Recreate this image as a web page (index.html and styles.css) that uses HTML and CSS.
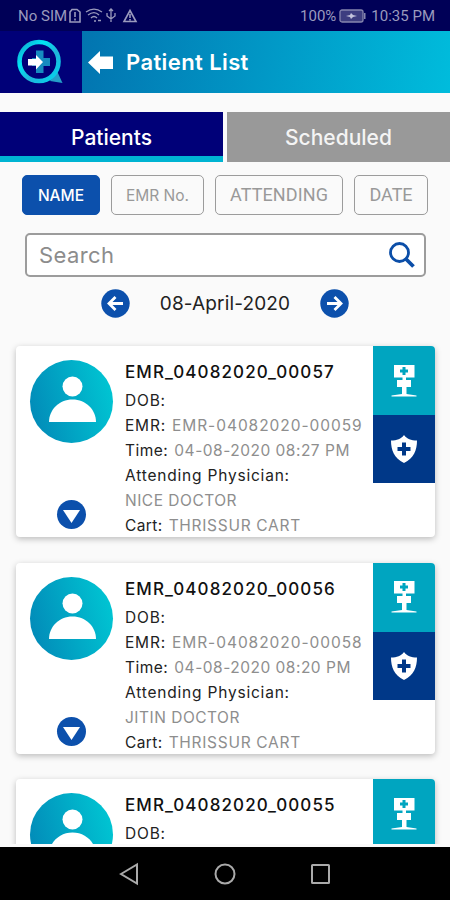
FILE: index.html
```html
<!DOCTYPE html>
<html lang="en">
<head>
    <meta charset="UTF-8">
    <title>Patient List</title>
    <link rel="stylesheet" href="styles.css">
</head>
<body>
<svg class="sprite" width="0" height="0">
    <symbol id="person" viewBox="0 0 48 48">
        <circle cx="24.5" cy="11.5" r="10"/>
        <path d="M1 47C1 35 11 24.500 24.500 24.500S48 35 48 47Z"/>
    </symbol>
    <symbol id="cart" viewBox="0 0 26 34">
        <path fill-rule="evenodd" d="M3 1H23.500V13.500H15V16H20V23H15.500V30L25.500 31.500V32.500H.5V31.500L11 30V23H6V16H11.500V13.500H3ZM11.500 3V5.500H9V8.500H11.500V11H14.500V8.500H17V5.500H14.500V3Z"/>
    </symbol>
    <symbol id="shield" viewBox="0 0 26 28">
        <path fill-rule="evenodd" d="M13 0C16 4 20 5.500 26 5.500C26 15 23 23 13 28C3 23 0 15 0 5.500C6 5.500 10 4 13 0ZM11 7.500V12H6.500V16H11V20.500H15V16H19.500V12H15V7.500Z"/>
    </symbol>
</svg>
<div class="phone">
    <div class="status">
        <span class="sim">No SIM</span>
        <svg class="status-icons" width="72" height="16" viewBox="0 0 72 16" fill="none" stroke="currentColor" stroke-width="1.3">
            <path d="M4 1.500H9L12 4V14H2V4ZM7 4V9M7 10.500V12.500" stroke-width="1.600"/>
            <path d="M18 4C23 .5 29 .5 34 4M20 7C24 4 28 4 31 7M23 10C25 8 27 8 29 10M26 13H28M30 12.500H33"/>
            <path d="M43 1V14M41 3L43 1L45 3M39 5V8L43 11L47 8V5"/>
            <path d="M62 2.500L68 13.500H56ZM62 6V10M62 11V12.500" stroke-width="1.600"/>
        </svg>
        <span class="battery">100%</span>
        <svg class="battery-icon" width="27" height="14" viewBox="0 0 27 14">
            <rect x="1" y="1" width="23" height="12" rx="2" fill="#3d3d80" stroke="#8585ae" stroke-width="1.300"/>
            <path d="M25 4H26.500V10H25Z" fill="#8585ae"/>
            <path d="M7 7L11 6L12 4L14 6L18 7L14 8L12 10L11 8Z" fill="#c4c4dc"/>
        </svg>
        <span class="clock">10:35 PM</span>
    </div>
    <div class="header">
        <div class="logo">
            <svg width="46" height="46" viewBox="0 0 46 46">
                <defs>
                    <linearGradient id="ring" x1="0" y1="0" x2="1" y2="1">
                        <stop offset="0" stop-color="#159fcb"/>
                        <stop offset=".3" stop-color="#00e4f4"/>
                        <stop offset=".6" stop-color="#20b5da"/>
                        <stop offset="1" stop-color="#00d5ef"/>
                    </linearGradient>
                </defs>
                <path d="M40 32L45.500 44L33 42Z" fill="#249fc9"/>
                <circle cx="22" cy="22.500" r="19.500" fill="none" stroke="url(#ring)" stroke-width="4.600"/>
                <path d="M19 11.500H26.500V19H33V27H26.500V34H19V27H15V19H19Z" fill="#168bc0"/>
                <path d="M11 20H19V16L26 23L19 30.500V26.500H11Z" fill="#fff"/>
            </svg>
        </div>
        <div class="bar">
            <svg width="25" height="23" viewBox="0 0 25 23" fill="#fff">
                <path d="M0 11.500L12 0V5.500H25V18H12V23Z"/>
            </svg>
            <h1>Patient List</h1>
        </div>
    </div>
    <div class="tabs">
        <div class="tab active">Patients</div>
        <div class="tab scheduled">Scheduled</div>
    </div>
    <div class="filters">
        <div class="filter selected">NAME</div>
        <div class="filter emr">EMR No.</div>
        <div class="filter attending">ATTENDING</div>
        <div class="filter date">DATE</div>
    </div>
    <div class="search">
        <span>Search</span>
        <svg width="26" height="26" viewBox="0 0 26 26" fill="none" stroke="#0b4ea8">
            <circle cx="10.500" cy="10.500" r="9" stroke-width="2.800"/>
            <path d="M17 17L24.500 24.500" stroke-width="3.800"/>
        </svg>
    </div>
    <div class="day">
        <svg width="29" height="29" viewBox="0 0 29 29">
            <circle cx="14.500" cy="14.500" r="14.200" fill="#0c50ac"/>
            <path d="M22 14.500H8M14.500 8L8 14.500L14.500 21" fill="none" stroke="#fff" stroke-width="2.800"/>
        </svg>
        <span>08-April-2020</span>
        <svg width="29" height="29" viewBox="0 0 29 29">
            <circle cx="14.500" cy="14.500" r="14.200" fill="#0c50ac"/>
            <path d="M7 14.500H21M14.500 8L21 14.500L14.500 21" fill="none" stroke="#fff" stroke-width="2.800"/>
        </svg>
    </div>
    <div class="list">
        <div class="card">
            <div class="side">
                <div class="avatar"><svg width="48" height="48"><use href="#person"/></svg></div>
                <div class="expand"><svg width="17" height="13" viewBox="0 0 17 13"><path d="M0 0H17L8.500 13Z"/></svg></div>
            </div>
            <div class="info">
                <h2>EMR_04082020_00057</h2>
                <p><b class="dob">DOB:</b></p>
                <p><b class="emr-key">EMR:</b><span class="emr-no">EMR-04082020-00059</span></p>
                <p><b class="time-key">Time:</b><span class="time">04-08-2020 08:27 PM</span></p>
                <p><b class="physician">Attending Physician:</b></p>
                <p><span class="doctor">NICE DOCTOR</span></p>
                <p><b class="cart-key">Cart:</b><span class="cart-name">THRISSUR CART</span></p>
            </div>
            <div class="actions">
                <div class="action"><svg width="26" height="34"><use href="#cart"/></svg></div>
                <div class="action safe"><svg width="26" height="28"><use href="#shield"/></svg></div>
            </div>
        </div>
        <div class="card">
            <div class="side">
                <div class="avatar"><svg width="48" height="48"><use href="#person"/></svg></div>
                <div class="expand"><svg width="17" height="13" viewBox="0 0 17 13"><path d="M0 0H17L8.500 13Z"/></svg></div>
            </div>
            <div class="info">
                <h2>EMR_04082020_00056</h2>
                <p><b class="dob">DOB:</b></p>
                <p><b class="emr-key">EMR:</b><span class="emr-no">EMR-04082020-00058</span></p>
                <p><b class="time-key">Time:</b><span class="time">04-08-2020 08:20 PM</span></p>
                <p><b class="physician">Attending Physician:</b></p>
                <p><span class="doctor">JITIN DOCTOR</span></p>
                <p><b class="cart-key">Cart:</b><span class="cart-name">THRISSUR CART</span></p>
            </div>
            <div class="actions">
                <div class="action"><svg width="26" height="34"><use href="#cart"/></svg></div>
                <div class="action safe"><svg width="26" height="28"><use href="#shield"/></svg></div>
            </div>
        </div>
        <div class="card">
            <div class="side">
                <div class="avatar"><svg width="48" height="48"><use href="#person"/></svg></div>
            </div>
            <div class="info">
                <h2>EMR_04082020_00055</h2>
                <p><b class="dob">DOB:</b></p>
            </div>
            <div class="actions">
                <div class="action"><svg width="26" height="34"><use href="#cart"/></svg></div>
            </div>
        </div>
    </div>
    <div class="nav">
        <svg width="22" height="24" viewBox="0 0 22 24"><path d="M3 12L19 2.500V21.500Z"/></svg>
        <svg width="24" height="24" viewBox="0 0 24 24"><circle cx="12" cy="12" r="9.500"/></svg>
        <svg width="22" height="24" viewBox="0 0 22 24"><rect x="2" y="3" width="17" height="18" rx=".5"/></svg>
    </div>
</div>
</body>
</html>
```
FILE: styles.css
```css
* {
    box-sizing: border-box;
}
body {
    margin: 0px;
    font-family: Inter, "Open Sans", sans-serif;
}
svg {
    display: block;
    flex: none;
}
.sprite {
    position: absolute;
}
.phone {
    width: 450px;
    height: 900px;
    overflow: hidden;
    display: flex;
    flex-direction: column;
    background: #fafafa;
    white-space: nowrap;
}
.status {
    height: 31px;
    flex: none;
    display: flex;
    align-items: center;
    padding: 1px 15px 0px 18px;
    background: #000057;
    color: #9a9abd;
    font-family: Roboto, sans-serif;
    font-size: 15px;
}
.status-icons {
    margin-left: 1px;
}
.battery {
    margin-left: auto;
}
.battery-icon {
    margin: 0px 5px 0px 3px;
}
.header {
    height: 62px;
    flex: none;
    display: flex;
}
.logo {
    width: 82px;
    background: #000078;
    padding: 8px 0px 0px 17px;
}
.bar {
    flex: 1;
    display: flex;
    align-items: center;
    padding-left: 6px;
    background: linear-gradient(100deg, #0274b0, #00bcdc);
    color: #fff;
}
.bar h1 {
    margin: 0px 0px 0px 13px;
    font-size: 22px;
    font-weight: 600;
    letter-spacing: 0.4px;
}
.tabs {
    height: 50px;
    flex: none;
    margin-top: 19px;
    display: flex;
    gap: 4px;
}
.tab {
    width: 223px;
    display: flex;
    align-items: center;
    justify-content: center;
    background: #999;
    color: #f4f4f4;
    font-size: 21px;
    font-weight: 500;
}
.tab.active {
    background: #000078;
    border-bottom: 6px solid #00b4d2;
    padding-top: 6px;
    color: #fff;
}
.filters {
    flex: none;
    display: flex;
    gap: 11px;
    padding: 13px 0px 0px 22px;
}
.filter {
    height: 40px;
    display: flex;
    align-items: center;
    justify-content: center;
    border: 1px solid #9c9c9c;
    border-radius: 5px;
    color: #999;
    font-size: 15.5px;
}
.filter.selected {
    width: 78px;
    background: #0c50ac;
    border-color: #0c50ac;
    color: #fff;
    font-size: 15.5px;
    font-weight: 500;
}
.filter.emr {
    width: 93px;
}
.filter.attending {
    width: 128px;
    font: 18px Roboto, sans-serif;
    letter-spacing: 0.1px;
}
.filter.date {
    width: 74px;
    font: 18px Roboto, sans-serif;
}
.filter.attending, .filter.date {
    padding-bottom: 2px;
}
.search {
    height: 44px;
    flex: none;
    margin: 18px 24px 0px 25px;
    padding: 0px 9px 1px 12px;
    display: flex;
    align-items: center;
    justify-content: space-between;
    border: 2px solid #9c9c9c;
    border-radius: 5px;
    background: #fff;
    color: #8c8c8c;
    font-size: 22px;
    letter-spacing: 0.4px;
}
.day {
    flex: none;
    display: flex;
    align-items: center;
    justify-content: space-between;
    height: 29px;
    margin: 12px 101px 0px;
    color: #222;
    font-size: 19px;
    letter-spacing: 0.15px;
}
.list {
    height: 526px;
    flex: none;
    padding: 28px 15px 0px 16px;
    overflow: hidden;
}
.card {
    height: 191px;
    margin-bottom: 25.5px;
    display: flex;
    background: #fff;
    border-radius: 4px;
    box-shadow: 0px 2px 6px rgba(0, 0, 0, 0.25);
    overflow: hidden;
}
.side {
    width: 109px;
    padding: 14px 0px 8px 14px;
    display: flex;
    flex-direction: column;
    justify-content: space-between;
}
.avatar {
    width: 83px;
    height: 83px;
    border-radius: 50%;
    background: linear-gradient(75deg, #0286b6, #00cad5);
    padding: 15px 0px 0px 18px;
    fill: #fff;
}
.expand {
    width: 29px;
    height: 29px;
    margin-left: 27px;
    border-radius: 50%;
    background: #0c50ac;
    padding: 10px 0px 0px 6px;
    fill: #fff;
}
.info {
    width: 248px;
    padding-top: 13px;
}
.info h2 {
    margin: 0px 0px 3px;
    font-size: 17px;
    font-weight: 500;
    line-height: 26px;
    letter-spacing: 1.1px;
    color: #111;
}
.info p {
    height: 25px;
    margin: 0px;
    line-height: 25px;
    font-size: 15.5px;
    color: #8e8e8e;
    display: flex;
}
.info b {
    font-weight: 400;
    color: #222;
}
.info b + span {
    margin-left: 6px;
}
.info .dob, .info .emr-key, .info .physician {
    letter-spacing: 0.8px;
}
.info .emr-no {
    letter-spacing: 0.95px;
}
.info .time-key, .info .time, .info .doctor {
    letter-spacing: 0.5px;
}
.info .cart-key {
    letter-spacing: 0.4px;
}
.info .cart-name {
    letter-spacing: 0.7px;
}
.actions {
    flex: 1;
}
.action {
    height: 69px;
    display: flex;
    align-items: center;
    justify-content: center;
    background: #00a5c0;
    fill: #fff;
}
.action.safe {
    height: 68px;
    background: #003888;
}
.nav {
    flex: 1;
    display: flex;
    align-items: center;
    justify-content: center;
    gap: 73px;
    margin-top: 3px;
    background: #000;
    fill: none;
    stroke: #aaa;
    stroke-width: 2px;
}
```
